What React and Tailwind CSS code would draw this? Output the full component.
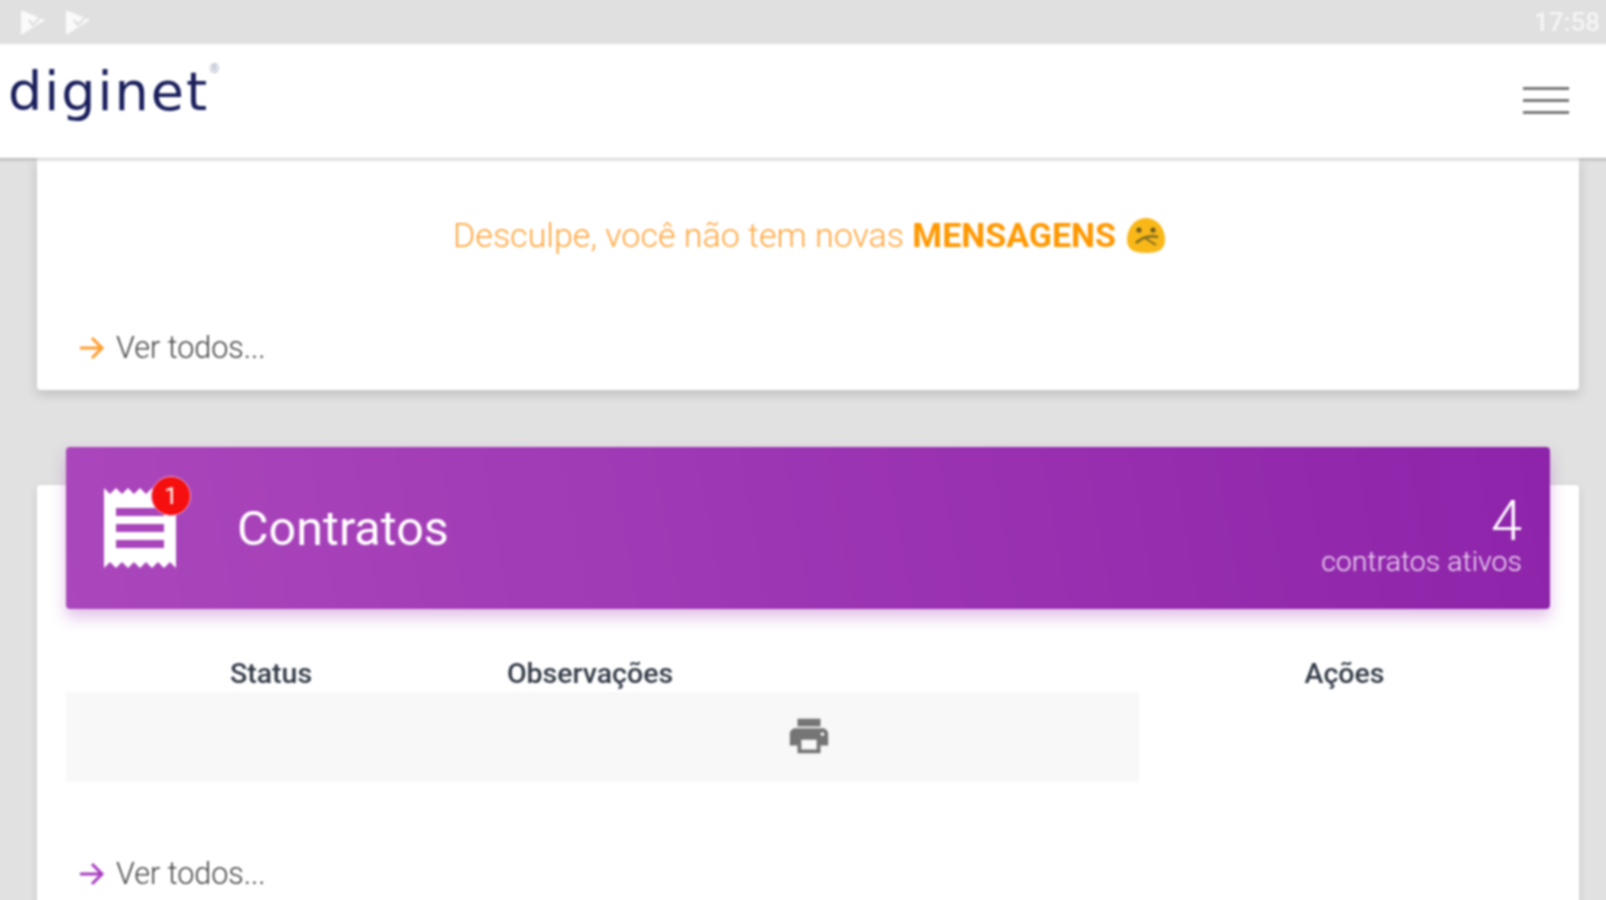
import { useState } from "react";

const roboto = { fontFamily: "Roboto, sans-serif" };

/* ===== ICONOS ===== */
function StatusIcon() {
  return (
    <svg width="26" height="28" viewBox="0 0 26 28" fill="none">
      <path d="M1 2 L25 12 L1 27 Z" fill="#fafafa" />
      <path d="M9 12 L13 17 L24 5" stroke="#e0e0e0" strokeWidth="2.5" />
    </svg>
  );
}

function Arrow({ color }) {
  return (
    <svg width="26" height="26" viewBox="0 0 26 26" fill="none" stroke={color} strokeWidth="3">
      <path d="M1 13 H23 M13 3 L23 13 L13 23" />
    </svg>
  );
}

function SadEmoji() {
  return (
    <svg width="40" height="37" viewBox="0 0 40 37">
      <path d="M20 1 C31 1 39 11 39 23 C39 32 33 36 20 36 C7 36 1 32 1 23 C1 11 9 1 20 1 Z" fill="#f9b818" />
      <circle cx="13" cy="13" r="2.6" fill="#6b5a22" />
      <circle cx="27" cy="13" r="2.6" fill="#6b5a22" />
      <path d="M10 26 Q20 17 32 20" stroke="#7d6a22" strokeWidth="2.5" fill="none" />
      <path d="M19 21 L30 28" stroke="#7d6a22" strokeWidth="2" />
    </svg>
  );
}

function VerTodos({ color }) {
  return (
    <div className="flex items-center gap-[11px] text-[30.5px] font-light leading-none text-[#444]">
      <Arrow color={color} />
      <span>Ver todos...</span>
    </div>
  );
}

export default function App() {
  const [contratos] = useState(4);

  return (
    <div className="h-[900px] w-[1606px] overflow-hidden bg-[#e1e1e1]">
      <div className="relative h-[900px] w-[1606px] blur-[1px]" style={roboto}>
        {/* ===== BARRA DE ESTADO ===== */}
        <div className="flex h-[44px] items-center bg-[#e0e0e0] pl-[20px] pr-[6px]">
          <div className="flex gap-[19px]">
            <StatusIcon />
            <StatusIcon />
          </div>
          <span className="ml-auto text-[26px] font-medium text-[#f5f5f5]">17:58</span>
        </div>

        {/* ===== HEADER ===== */}
        <header className="relative z-10 -mx-[4px] flex h-[114px] items-center justify-between bg-white pl-[12px] pr-[41px] shadow-[0_2px_3px_rgba(0,0,0,0.2)]">
          <div className="relative -mt-[18px] flex items-start">
            <span
              className="text-[54px] leading-none tracking-[2px] text-[#1a1f5c]"
              style={{ fontFamily: "'DejaVu Sans', sans-serif", fontWeight: 400 }}
            >
              diginet
            </span>
            <span className="absolute -right-[10px] top-[-5px] text-[12px] text-[#9aa0b8]">®</span>
          </div>
          <div className="mb-[2px] flex w-[46px] flex-col gap-[9px]">
            <div className="h-[3px] bg-[#777]" />
            <div className="h-[3px] bg-[#777]" />
            <div className="h-[3px] bg-[#777]" />
          </div>
        </header>

        <main className="pl-[37px] pr-[27px]">
          {/* ===== MENSAGENS ===== */}
          <section className="flex h-[232px] flex-col rounded-b-[4px] bg-white shadow-[0_4px_12px_rgba(0,0,0,0.16)]">
            <div className="flex h-[155px] items-center justify-center pl-[3px] text-[34px] font-light text-[#ffa63d]">
              <span className="mr-[10px]">
                Desculpe, você não tem novas{" "}
                <b className="font-bold text-[#ff9800]">MENSAGENS</b>
              </span>
              <SadEmoji />
            </div>
            <div className="mt-[20px] pl-[42px]">
              <VerTodos color="#ff9d2e" />
            </div>
          </section>

          {/* ===== CONTRATOS ===== */}
          <section className="mt-[95px] flow-root h-[500px] rounded-[4px] bg-white px-[29px] shadow-[0_2px_8px_rgba(0,0,0,0.1)]">
            <div className="relative -mt-[38px] flex h-[162px] items-center rounded-[4px] bg-[linear-gradient(80deg,#ab47bc,#8e24aa)] pl-[26px] pr-[28px] text-white shadow-[0_8px_16px_rgba(156,39,176,0.3)]">
              <div className="relative h-[96px] w-[96px]">
                <svg width="96" height="96" viewBox="0 0 24 24" fill="#fff">
                  <path d="M18 17H6v-2h12v2zm0-4H6v-2h12v2zm0-4H6V7h12v2zM3 22l1.5-1.5L6 22l1.5-1.5L9 22l1.5-1.5L12 22l1.5-1.5L15 22l1.5-1.5L18 22l1.5-1.5L21 22V2l-1.5 1.5L18 2l-1.5 1.5L15 2l-1.5 1.5L12 2l-1.5 1.5L9 2 7.5 3.5 6 2 4.5 3.5 3 2v20z" />
                </svg>
                <span className="absolute left-[59px] top-[-4px] flex h-[40px] w-[40px] items-center justify-center rounded-full border border-[#e9a4d8] bg-[#f50f0f] text-[24px]">
                  1
                </span>
              </div>
              <h2 className="ml-[49px] mt-[3px] text-[48.5px] leading-none">Contratos</h2>
              <div className="ml-auto mt-[16px] text-right">
                <div className="text-[56px] font-light leading-[52px]">{contratos}</div>
                <div className="text-[28.5px] font-light leading-[30px] text-[#f1dcf5]">contratos ativos</div>
              </div>
            </div>

            {/* ===== TABLA ===== */}
            <div className="grid grid-cols-[410px_228px_435px_411px] pt-[46px] text-center text-[28.5px] font-medium leading-[37px] text-[#333b47]">
              <div>Status</div>
              <div>Observações</div>
              <div />
              <div>Ações</div>
            </div>
            <div className="flex h-[90px] w-[1073px] items-center bg-[#f8f8f8] pb-[2px] pl-[720px] text-[#757575]">
              <svg width="46" height="46" viewBox="0 0 24 24" fill="currentColor">
                <path d="M19 8H5c-1.66 0-3 1.34-3 3v6h4v4h12v-4h4v-6c0-1.66-1.34-3-3-3zm-3 11H8v-5h8v5zm3-7c-.55 0-1-.45-1-1s.45-1 1-1 1 .45 1 1-.45 1-1 1zm-1-9H6v4h12V3z" />
              </svg>
            </div>
            <div className="pl-[13px] pt-[77px]">
              <VerTodos color="#a83dc0" />
            </div>
          </section>
        </main>
      </div>
    </div>
  );
}
